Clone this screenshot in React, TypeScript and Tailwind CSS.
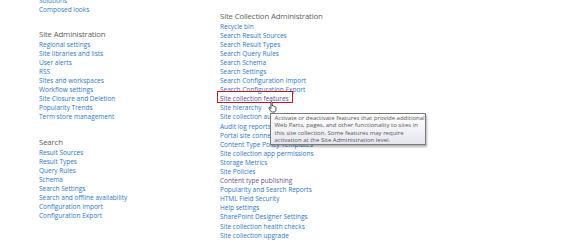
import React from "react";

const blue = "text-[#2e77c4]";

function Link({ children, visited }: { children: React.ReactNode; visited?: boolean }) {
  return (
    <div className={`h-[9.1px] leading-[9.1px] whitespace-nowrap ${visited ? "text-[#6d4f8e]" : blue}`}>
      {children}
    </div>
  );
}

function Header({ children }: { children: React.ReactNode }) {
  return (
    <div className="h-[11px] leading-[11px] text-[7.8px] tracking-[-0.15px] text-[#606060] whitespace-nowrap">
      {children}
    </div>
  );
}

export default function App() {
  const right = [
    "Recycle bin",
    "Search Result Sources",
    "Search Result Types",
    "Search Query Rules",
    "Search Schema",
    "Search Settings",
    "Search Configuration Import",
    "Search Configuration Export",
  ];
  const right2 = [
    "Site hierarchy",
    "Site collection audit settings",
    "Audit log reports",
    "Portal site connection",
    "Content Type Policy Templates",
    "Site collection app permissions",
    "Storage Metrics",
    "Site Policies",
  ];
  const right3 = [
    "Popularity and Search Reports",
    "HTML Field Security",
    "Help settings",
    "SharePoint Designer Settings",
    "Site collection health checks",
    "Site collection upgrade",
  ];
  return (
    <div className="relative w-[575px] h-[252px] overflow-hidden bg-white font-['Open_Sans',sans-serif] text-[6.5px]">
      <div className="flex pl-[39px]">
        <div className="w-[181px] mt-[-4.5px]">
          <Link>Solutions</Link>
          <Link>Composed looks</Link>
          <div className="mt-[15px]">
            <Header>Site Administration</Header>
            <Link>Regional settings</Link>
            <Link>Site libraries and lists</Link>
            <Link>User alerts</Link>
            <Link>RSS</Link>
            <Link>Sites and workspaces</Link>
            <Link>Workflow settings</Link>
            <Link>Site Closure and Deletion</Link>
            <Link>Popularity Trends</Link>
            <Link>Term store management</Link>
          </div>
          <div className="mt-[15px]">
            <Header>Search</Header>
            <Link>Result Sources</Link>
            <Link>Result Types</Link>
            <Link>Query Rules</Link>
            <Link>Schema</Link>
            <Link>Search Settings</Link>
            <Link>Search and offline availability</Link>
            <Link>Configuration Import</Link>
            <Link>Configuration Export</Link>
          </div>
        </div>
        <div className="mt-[10.5px]">
          <Header>Site Collection Administration</Header>
          {right.map((t) => (
            <Link key={t}>{t}</Link>
          ))}
          <div className="relative h-[9.1px] leading-[9.1px] whitespace-nowrap text-[#5b4c9c] underline">
            Site collection features
            <div className="absolute left-[-3.5px] top-[-3.5px] w-[76px] h-[12px] border-[1.5px] border-[#c8171e]" />
          </div>
          {right2.map((t) => (
            <Link key={t}>{t}</Link>
          ))}
          <Link visited>Content type publishing</Link>
          {right3.map((t) => (
            <Link key={t}>{t}</Link>
          ))}
        </div>
      </div>

      {/* cursor */}
      <svg className="absolute left-[268px] top-[101px]" width="10" height="12" viewBox="0 0 10 12">
        <path
          d="M3 0.8 C3.6 0.4 4.2 0.8 4.2 1.4 L4.2 5 L4.4 4.6 C4.9 4.3 5.4 4.5 5.5 5 L5.6 5.2 C6.1 4.9 6.6 5.1 6.7 5.6 L6.8 5.8 C7.3 5.5 7.9 5.8 7.9 6.4 L7.9 9 C7.9 10.2 7.2 11 6.2 11 L4.2 11 C3.5 11 3 10.6 2.6 10 L1 7.4 C0.7 6.9 1 6.4 1.5 6.4 C1.9 6.4 2.2 6.7 2.6 7.2 L2.9 7.6 L2.9 1.4 Z"
          fill="#fff"
          stroke="#222"
          strokeWidth="0.8"
        />
      </svg>

      {/* tooltip */}
      <div className="absolute left-[270px] top-[113px] w-[156px] h-[32px] border border-[#7a7a7a] bg-gradient-to-b from-white to-[#e6e7ef] shadow-[1px_2px_2px_rgba(0,0,0,0.3)] px-[3.5px] pt-[0.5px] text-[6px] leading-[7.6px] text-[#575757] whitespace-nowrap">
        <div>Activate or deactivate features that provide additional</div>
        <div>Web Parts, pages, and other functionality to sites in</div>
        <div>this site collection. Some features may require</div>
        <div>activation at the Site Administration level.</div>
      </div>
    </div>
  );
}
